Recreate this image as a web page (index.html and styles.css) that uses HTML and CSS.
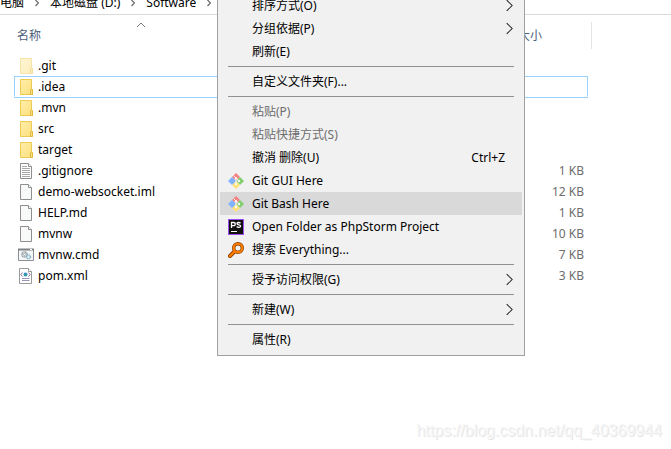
FILE: index.html
```html
<!DOCTYPE html>
<html lang="zh-CN">
  <head>
    <meta charset="UTF-8" />
    <meta name="viewport" content="width=device-width, initial-scale=1.0" />
    <title>Software</title>
    <link rel="stylesheet" href="styles.css" />
  </head>
  <body>
    <!-- shared shapes -->
    <svg class="sprite" aria-hidden="true">
      <linearGradient id="folderFill" x1="0" y1="0" x2="1" y2="1">
        <stop offset="0" stop-color="#ffeeaa" />
        <stop offset="1" stop-color="#fddf7c" />
      </linearGradient>
      <symbol id="folder" viewBox="0 0 16 16">
        <path d="M2.500.5h11v10h1v5h-12z" fill="url(#folderFill)" stroke="#edca52" />
        <path d="M12.500 15.500v-4.500l1-1 1 1v4.500z" fill="#fbe08a" stroke="#e3b93c" />
      </symbol>
      <symbol id="file" viewBox="0 0 16 16">
        <path d="M2.500.5h8l3 3v12h-11z" fill="#f8f9f9" stroke="#8e8e8e" />
        <path d="M10.500.5v3h3" fill="#fff" stroke="#8e8e8e" />
      </symbol>
      <symbol id="text" viewBox="0 0 16 16">
        <path d="M2.500.5h8l3 3v12h-11z" fill="#fff" stroke="#8e8e8e" />
        <path d="M10.500.5v3h3" fill="#fff" stroke="#8e8e8e" />
        <path d="M4 3.500h5M4 5.500h8M4 7.500h8M4 9.500h8M4 11.500h8M4 13.500h8" stroke="#a9a9a9" />
      </symbol>
      <symbol id="cmd" viewBox="0 0 16 16">
        <path d="M.5 2.500h15v11H.5z" fill="#f4f6f7" stroke="#8b8f92" />
        <path d="M0 2.500h16" stroke="#7d8184" stroke-width="2" />
        <path d="M12 2.500h2" stroke="#fff" />
        <circle cx="6.500" cy="7.500" r="2.600" fill="#e4e8ea" stroke="#8d989e" stroke-width="1.400" stroke-dasharray="1.300 .5" />
        <circle cx="6.500" cy="7.500" r="1" fill="#fff" stroke="#8d989e" stroke-width=".7" />
        <circle cx="10.500" cy="9.800" r="2" fill="#d5edf6" stroke="#84aec0" stroke-width="1.300" stroke-dasharray="1.200 .5" />
      </symbol>
      <symbol id="xml" viewBox="0 0 16 16">
        <path d="M1.500.5h9l3 3v12h-12z" fill="#fff" stroke="#9a9a9a" />
        <path d="M10.500.5v3h3" fill="#fff" stroke="#9a9a9a" />
        <path d="M4.500 4.500L2.800 6.500l1.700 2M10.500 4.500l1.700 2-1.700 2" fill="none" stroke="#7d5a86" stroke-width=".9" />
        <circle cx="7.500" cy="6.500" r="2" fill="#2f8fc0" />
        <path d="M6.500 6l2 1-1 1.200z" fill="#3eae60" />
        <path d="M4 10.500h7.500M4 12.500h7.500" stroke="#9b96b4" />
      </symbol>
      <symbol id="git" viewBox="0 0 16 16">
        <path d="M8 0l4 4-4 4-4-4z" fill="#f58282" />
        <path d="M12 4l4 4-4 4-4-4z" fill="#80cf6c" />
        <path d="M8 8l4 4-4 4-4-4z" fill="#ffe27a" />
        <path d="M4 4l4 4-4 4-4-4z" fill="#80b3ff" />
        <path d="M5.500 2.500L8 5v6M8 5.500L11 8" fill="none" stroke="#f6f6f6" />
        <circle cx="8" cy="5.200" r="1.200" fill="#f6f6f6" />
        <circle cx="11" cy="8" r="1.200" fill="#f6f6f6" />
        <circle cx="8" cy="11" r="1.200" fill="#f6f6f6" />
      </symbol>
      <symbol id="arrow" viewBox="0 0 8 14">
        <path d="M.8 .8L7 7 .8 13.200" fill="none" stroke="currentColor" stroke-width="1.200" />
      </symbol>
      <symbol id="crumb" viewBox="0 0 4 8">
        <path d="M.5 1l3 3-3 3" fill="none" stroke="currentColor" stroke-width="1.200" />
      </symbol>
    </svg>

    <nav class="path-bar">
      <a href="#">电脑</a>
      <svg class="crumb"><use href="#crumb" /></svg>
      <a href="#">本地磁盘 (D:)</a>
      <svg class="crumb"><use href="#crumb" /></svg>
      <a href="#">Software</a>
      <svg class="crumb"><use href="#crumb" /></svg>
    </nav>

    <main class="file-pane">
      <table class="files">
        <thead>
          <tr>
            <th class="name">
              名称
              <svg class="sort" viewBox="0 0 9 6"><path d="M.5 5l4-4 4 4" fill="none" stroke="#777" /></svg>
            </th>
            <th class="size">大小</th>
            <th class="edge"><span class="divider"></span></th>
          </tr>
        </thead>
        <tbody>
          <tr class="hidden-file">
            <td><div class="entry"><svg class="icon"><use href="#folder" /></svg>.git</div></td>
            <td></td>
          </tr>
          <tr class="focused">
            <td><div class="entry"><svg class="icon"><use href="#folder" /></svg>.idea</div></td>
            <td></td>
          </tr>
          <tr>
            <td><div class="entry"><svg class="icon"><use href="#folder" /></svg>.mvn</div></td>
            <td></td>
          </tr>
          <tr>
            <td><div class="entry"><svg class="icon"><use href="#folder" /></svg>src</div></td>
            <td></td>
          </tr>
          <tr>
            <td><div class="entry"><svg class="icon"><use href="#folder" /></svg>target</div></td>
            <td></td>
          </tr>
          <tr>
            <td><div class="entry"><svg class="icon"><use href="#text" /></svg>.gitignore</div></td>
            <td>1 KB</td>
          </tr>
          <tr>
            <td><div class="entry"><svg class="icon"><use href="#file" /></svg>demo-websocket.iml</div></td>
            <td>12 KB</td>
          </tr>
          <tr>
            <td><div class="entry"><svg class="icon"><use href="#file" /></svg>HELP.md</div></td>
            <td>1 KB</td>
          </tr>
          <tr>
            <td><div class="entry"><svg class="icon"><use href="#file" /></svg>mvnw</div></td>
            <td>10 KB</td>
          </tr>
          <tr>
            <td><div class="entry"><svg class="icon"><use href="#cmd" /></svg>mvnw.cmd</div></td>
            <td>7 KB</td>
          </tr>
          <tr>
            <td><div class="entry"><svg class="icon"><use href="#xml" /></svg>pom.xml</div></td>
            <td>3 KB</td>
          </tr>
        </tbody>
      </table>
    </main>

    <div class="menu">
      <button>排序方式(O)<svg class="arrow"><use href="#arrow" /></svg></button>
      <button>分组依据(P)<svg class="arrow"><use href="#arrow" /></svg></button>
      <button>刷新(E)</button>
      <hr />
      <button>自定义文件夹(F)...</button>
      <hr />
      <button disabled>粘贴(P)</button>
      <button disabled>粘贴快捷方式(S)</button>
      <button>撤消 删除(U)<span class="shortcut">Ctrl+Z</span></button>
      <button class="with-icon"><svg class="icon"><use href="#git" /></svg>Git GUI Here</button>
      <button class="with-icon active"><svg class="icon"><use href="#git" /></svg>Git Bash Here</button>
      <button class="with-icon">
        <svg class="icon" viewBox="0 0 16 16">
          <path d="M0 0h16v16H0z" fill="#9b4df0" />
          <path d="M1 1h14v14H1z" fill="#111" />
          <path d="M3.500 9V3.500h2.200a1.500 1.500 0 0 1 0 3.200H3.500M12.500 4.200c-1-1-3.500-1-3.500.4 0 1.700 3.600.8 3.600 2.500 0 1.600-2.700 1.600-3.900.5" fill="none" stroke="#fff" stroke-width="1.300" />
          <path d="M3 12.500h6" stroke="#fff" />
        </svg>Open Folder as PhpStorm Project
      </button>
      <button class="with-icon">
        <svg class="icon" viewBox="0 0 16 16">
          <path d="M6.500 9.500L2 14" stroke="#8f3d00" stroke-width="4" stroke-linecap="round" />
          <circle cx="10" cy="6" r="4.300" fill="none" stroke="#8f3d00" stroke-width="3.400" />
          <path d="M6.500 9.500L2 14" stroke="#ff8000" stroke-width="2.200" stroke-linecap="round" />
          <circle cx="10" cy="6" r="4.300" fill="none" stroke="#ff8000" stroke-width="2" />
        </svg>搜索 Everything...
      </button>
      <hr />
      <button>授予访问权限(G)<svg class="arrow"><use href="#arrow" /></svg></button>
      <hr />
      <button>新建(W)<svg class="arrow"><use href="#arrow" /></svg></button>
      <hr />
      <button>属性(R)</button>
    </div>

    <footer class="watermark">https://blog.csdn.net/qq_40369944</footer>
  </body>
</html>
```
FILE: styles.css
```css
* {
  box-sizing: border-box;
}
body {
  display: flex;
  flex-direction: column;
  min-height: 100vh;
  margin: 0;
  overflow: hidden;
  background: #fff;
  color: #000;
  font-family: "Noto Sans", "Noto Sans CJK SC", sans-serif;
  font-size: 12px;
}
.sprite {
  position: absolute;
  width: 0;
  height: 0;
}
.icon {
  flex: none;
  width: 16px;
  height: 16px;
}

/* Address bar, scrolled half out of view */
.path-bar {
  display: flex;
  align-items: flex-end;
  gap: 11px;
  height: 15px;
  overflow: hidden;
  border-bottom: 1px solid #d9d9d9;
}
.path-bar a {
  color: #000;
  line-height: 22px;
  text-decoration: none;
  white-space: nowrap;
}
.crumb {
  flex: none;
  width: 4px;
  height: 8px;
  margin-bottom: 7px;
  color: #666;
}

/* File list */
.file-pane {
  padding: 0 79px 0 14px;
}
.files {
  width: 100%;
  table-layout: fixed;
  border-collapse: separate;
  border-spacing: 0;
}
th {
  height: 40px;
  padding: 0 0 0 3px;
  color: #4c607a;
  font-weight: normal;
  text-align: left;
}
.name {
  position: relative;
  width: 254px;
}
.size {
  padding-left: 250px;
}
.edge {
  width: 4px;
  padding: 0;
  vertical-align: top;
}
.divider {
  display: block;
  height: 27px;
  margin-top: 7px;
  border-right: 1px solid #e5e5e5;
}
.sort {
  position: absolute;
  top: 7px;
  left: 50%;
  width: 9px;
  height: 6px;
  transform: translateX(-50%);
}
td {
  height: 21px;
  padding: 0 4px;
  border: 1px solid transparent;
  border-width: 1px 0;
  color: #6d6d6d;
  line-height: 19px;
  text-align: right;
}
.entry {
  display: flex;
  align-items: center;
  gap: 4px;
  height: 19px;
  color: #000;
}
.hidden-file .icon {
  opacity: 0.5;
}
.focused td {
  border-color: #99d1ff;
}
.focused td:first-child {
  padding-left: 3px;
  border-left-width: 1px;
}
.focused td:last-child {
  border-right-width: 1px;
}
/* the focus frame closes on the first pixel of the next row */
.focused td {
  border-bottom-color: transparent;
}
.focused + tr td {
  border-top-color: #99d1ff;
}

/* Context menu */
.menu {
  position: absolute;
  top: -9px;
  left: 217px;
  width: 308px;
  padding: 2px 2px 4px;
  border: 1px solid #a0a0a0;
  background: #f1f1f1;
}
.menu button {
  display: flex;
  align-items: center;
  width: 100%;
  height: 23px;
  padding: 0 9px 0 32px;
  border: none;
  background: none;
  color: #000;
  font-family: inherit;
  font-size: 12px;
  line-height: 16px;
  text-align: left;
  white-space: nowrap;
}
.menu .with-icon {
  gap: 8px;
  padding-left: 8px;
}
.menu button:hover,
.menu .active {
  background: #d9d9d9;
}
.menu button:disabled {
  background: none;
  color: #6d6d6d;
}
.menu hr {
  height: 1px;
  margin: 3px 8px;
  border: none;
  background: #919191;
}
.arrow {
  width: 7px;
  height: 13px;
  margin-left: auto;
  color: #222;
}
.shortcut {
  margin-left: auto;
  padding-right: 8px;
}

.watermark {
  margin-top: auto;
  padding: 0 9px 8px;
  color: #f6f6f6;
  font-family: "Liberation Sans", sans-serif;
  font-size: 16px;
  line-height: 20px;
  text-align: right;
  text-shadow: 1px 1px 0 #e6e6e6;
}
```
